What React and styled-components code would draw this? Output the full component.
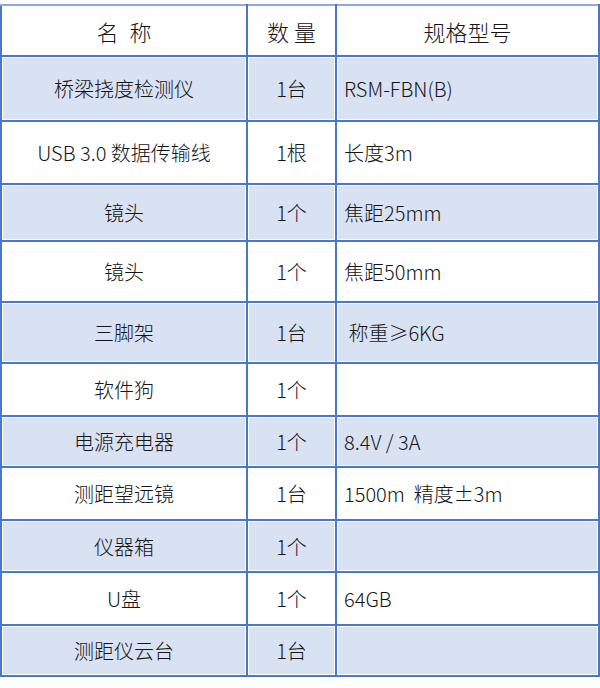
import styled, { createGlobalStyle } from "styled-components";

const GlobalStyle = createGlobalStyle`
  html, body {
    margin: 0;
    padding: 0;
    background: #ffffff;
  }
  body {
    font-family: "Noto Sans CJK SC", "Noto Sans", sans-serif;
    color: #151515;
  }
`;

const rows = [
  { name: "桥梁挠度检测仪", qty: "1台", spec: "RSM-FBN(B)", h: 65 },
  { name: "USB 3.0 数据传输线", qty: "1根", spec: "长度3m", h: 63 },
  { name: "镜头", qty: "1个", spec: "焦距25mm", h: 57 },
  { name: "镜头", qty: "1个", spec: "焦距50mm", h: 61 },
  { name: "三脚架", qty: "1台", spec: "\u00a0称重≥6KG", h: 61 },
  { name: "软件狗", qty: "1个", spec: "", h: 53 },
  { name: "电源充电器", qty: "1个", spec: "8.4V / 3A", h: 51 },
  { name: "测距望远镜", qty: "1台", spec: "1500m\u00a0\u00a0精度±3m", h: 53 },
  { name: "仪器箱", qty: "1个", spec: "", h: 52 },
  { name: "U盘", qty: "1个", spec: "64GB", h: 53 },
  { name: "测距仪云台", qty: "1台", spec: "", h: 51 },
];

const App = () => {
  return (
    <>
      <GlobalStyle />
      <Page>
        <Table>
          <colgroup>
            <col style={{ width: "246px" }} />
            <col style={{ width: "89px" }} />
            <col />
          </colgroup>
          <thead>
            <tr>
              <HeadCell>名{"\u2002"}称</HeadCell>
              <HeadCell>数&nbsp;量</HeadCell>
              <HeadCell>规格型号</HeadCell>
            </tr>
          </thead>
          <tbody>
            {rows.map((r, i) => (
              <Row key={i} $shade={i % 2 === 0} $h={r.h}>
                <Cell>{r.name}</Cell>
                <Cell>{r.qty}</Cell>
                <Cell $left>{r.spec}</Cell>
              </Row>
            ))}
          </tbody>
        </Table>
      </Page>
    </>
  );
};
export default App;

const Page = styled.div`
  padding-top: 4px;
  width: 600px;
`;

const Table = styled.table`
  width: 600px;
  border-collapse: collapse;
  table-layout: fixed;
`;

const HeadCell = styled.th`
  height: 49px;
  padding: 0;
  font-size: 22px;
  font-weight: 300;
  text-align: center;
  vertical-align: middle;
  border: 2px solid #4a78c9;
  border-top: 2px solid #8eaadb;
  background: #ffffff;
`;

const Row = styled.tr`
  height: ${(p) => p.$h}px;
  background: ${(p) => (p.$shade ? "#d9e2f3" : "#ffffff")};

  td {
    box-shadow: ${(p) => (p.$shade ? "inset 0 0 0 1px #ffffff" : "none")};
  }
`;

const Cell = styled.td`
  padding: ${(p) => (p.$left ? "0 0 0 7px" : "0")};
  font-size: 20px;
  font-weight: 300;
  text-align: ${(p) => (p.$left ? "left" : "center")};
  vertical-align: middle;
  border: 2px solid #4a78c9;
  white-space: nowrap;
`;
